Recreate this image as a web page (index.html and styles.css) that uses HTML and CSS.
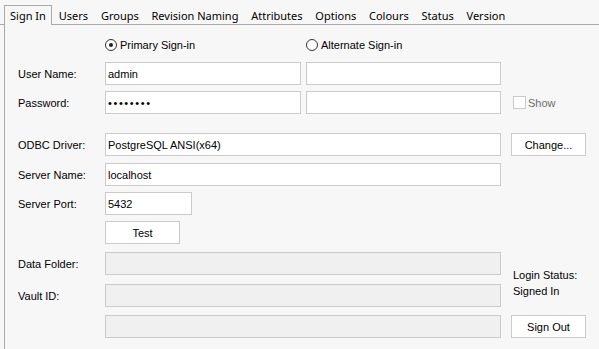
FILE: index.html
```html
<!DOCTYPE html>
<html>
<head>
<meta charset="utf-8">
<link rel="stylesheet" href="styles.css">
</head>
<body>
<div class="tabs">
  <span class="tab selected">Sign In</span>
  <span class="tab">Users</span>
  <span class="tab">Groups</span>
  <span class="tab">Revision Naming</span>
  <span class="tab">Attributes</span>
  <span class="tab">Options</span>
  <span class="tab">Colours</span>
  <span class="tab">Status</span>
  <span class="tab">Version</span>
</div>
<div class="panel">
  <div class="radios">
    <span class="label"></span>
    <label class="radio wide1"><span class="circle checked"></span>Primary Sign-in</label>
    <label class="radio"><span class="circle"></span>Alternate Sign-in</label>
  </div>
  <div class="row r1">
    <span class="label">User Name:</span>
    <input class="box half" type="text" value="admin">
    <input class="box half2" type="text" value="">
  </div>
  <div class="row r2">
    <span class="label">Password:</span>
    <input class="box half pw" type="password" value="password">
    <input class="box half2" type="text" value="">
    <label class="show"><span class="check"></span>Show</label>
  </div>
  <div class="row r3">
    <span class="label">ODBC Driver:</span>
    <input class="box full" type="text" value="PostgreSQL ANSI(x64)">
    <button class="btn side">Change...</button>
  </div>
  <div class="row r4">
    <span class="label">Server Name:</span>
    <input class="box full" type="text" value="localhost">
  </div>
  <div class="row r5">
    <span class="label">Server Port:</span>
    <input class="box port" type="text" value="5432">
  </div>
  <div class="row r6">
    <span class="label"></span>
    <button class="btn">Test</button>
  </div>
  <div class="row r7">
    <span class="label">Data Folder:</span>
    <input class="box full" type="text" value="" disabled>
    <div class="status">Login Status:<br>Signed In</div>
  </div>
  <div class="row r8">
    <span class="label">Vault ID:</span>
    <input class="box full" type="text" value="" disabled>
  </div>
  <div class="row r9">
    <span class="label"></span>
    <input class="box full" type="text" value="" disabled>
    <button class="btn side">Sign Out</button>
  </div>
</div>
</body>
</html>
```
FILE: styles.css
```css
html, body {
  margin: 0;
  padding: 0;
  background: #f7f7f7;
  width: 599px;
  height: 349px;
  overflow: hidden;
}
body {
  font-family: "Liberation Sans", Arial, sans-serif;
  font-size: 11px;
  color: #000;
}
.tabs {
  display: flex;
  align-items: flex-end;
  height: 24px;
  padding-left: 4px;
  border-bottom: 1px solid #a9a9a9;
  box-sizing: content-box;
  font-family: "Noto Sans", "Open Sans", sans-serif;
  font-size: 11px;
}
.tab {
  display: block;
  padding: 0 6.4px;
  height: 17px;
  line-height: 17px;
  color: #000;
}
.selected {
  height: 19px;
  line-height: 19px;
  padding: 0 5px;
  border: 1px solid #a9a9a9;
  border-bottom: none;
  background: #f7f7f7;
  margin-bottom: -1px;
  margin-right: 0.6px;
}
.panel {
  border-left: 1px solid #a9a9a9;
  margin-left: 4px;
  height: 310px;
  padding-left: 13px;
  padding-top: 14px;
}
.label {
  width: 87px;
  flex: none;
}
.radios {
  display: flex;
  align-items: center;
  height: 12px;
}
.radio {
  display: flex;
  align-items: center;
  gap: 3px;
}
.wide1 {
  width: 201px;
}
.circle {
  width: 10px;
  height: 10px;
  border: 1px solid #333;
  border-radius: 50%;
  background: #fff;
  position: relative;
  flex: none;
}
.circle.checked::after {
  content: "";
  position: absolute;
  left: 3px;
  top: 3px;
  width: 4px;
  height: 4px;
  border-radius: 50%;
  background: #222;
}
.row {
  display: flex;
  align-items: center;
  height: 23px;
}
.r1 { margin-top: 11px; }
.r2 { margin-top: 6px; }
.r3 { margin-top: 19px; }
.r4 { margin-top: 7px; }
.r5 { margin-top: 6px; }
.r6 { margin-top: 6px; }
.r7 { margin-top: 8px; }
.r8 { margin-top: 9px; }
.r9 { margin-top: 8px; }
.box {
  box-sizing: border-box;
  height: 23px;
  border: 1px solid #cbcbcb;
  background: #fff;
  font-family: "Liberation Sans", Arial, sans-serif;
  font-size: 11px;
  color: #000;
  padding: 0 2px;
  margin: 0;
  outline: none;
}
.box:disabled {
  background: #f0f0f0;
  border-color: #cbcbcb;
}
.half { width: 196px; }
.half2 { width: 195px; margin-left: 5px; }
.full { width: 396px; }
.port { width: 87px; }
.pw {
  letter-spacing: 1.6px;
  font-size: 11px;
}
.btn {
  box-sizing: border-box;
  width: 75px;
  height: 23px;
  border: 1px solid #cbcbcb;
  background: #fff;
  font-family: "Liberation Sans", Arial, sans-serif;
  font-size: 11px;
  color: #000;
  padding: 0;
  margin: 0;
}
.side {
  margin-left: 10px;
}
.show {
  display: flex;
  align-items: center;
  margin-left: 12px;
  gap: 2px;
  color: #6d6d6d;
}
.check {
  width: 11px;
  height: 11px;
  border: 1px solid #cbcbcb;
  background: #fff;
  flex: none;
}
.status {
  align-self: flex-start;
  margin-left: 12px;
  padding-top: 15px;
  line-height: 16px;
  white-space: nowrap;
}
```
